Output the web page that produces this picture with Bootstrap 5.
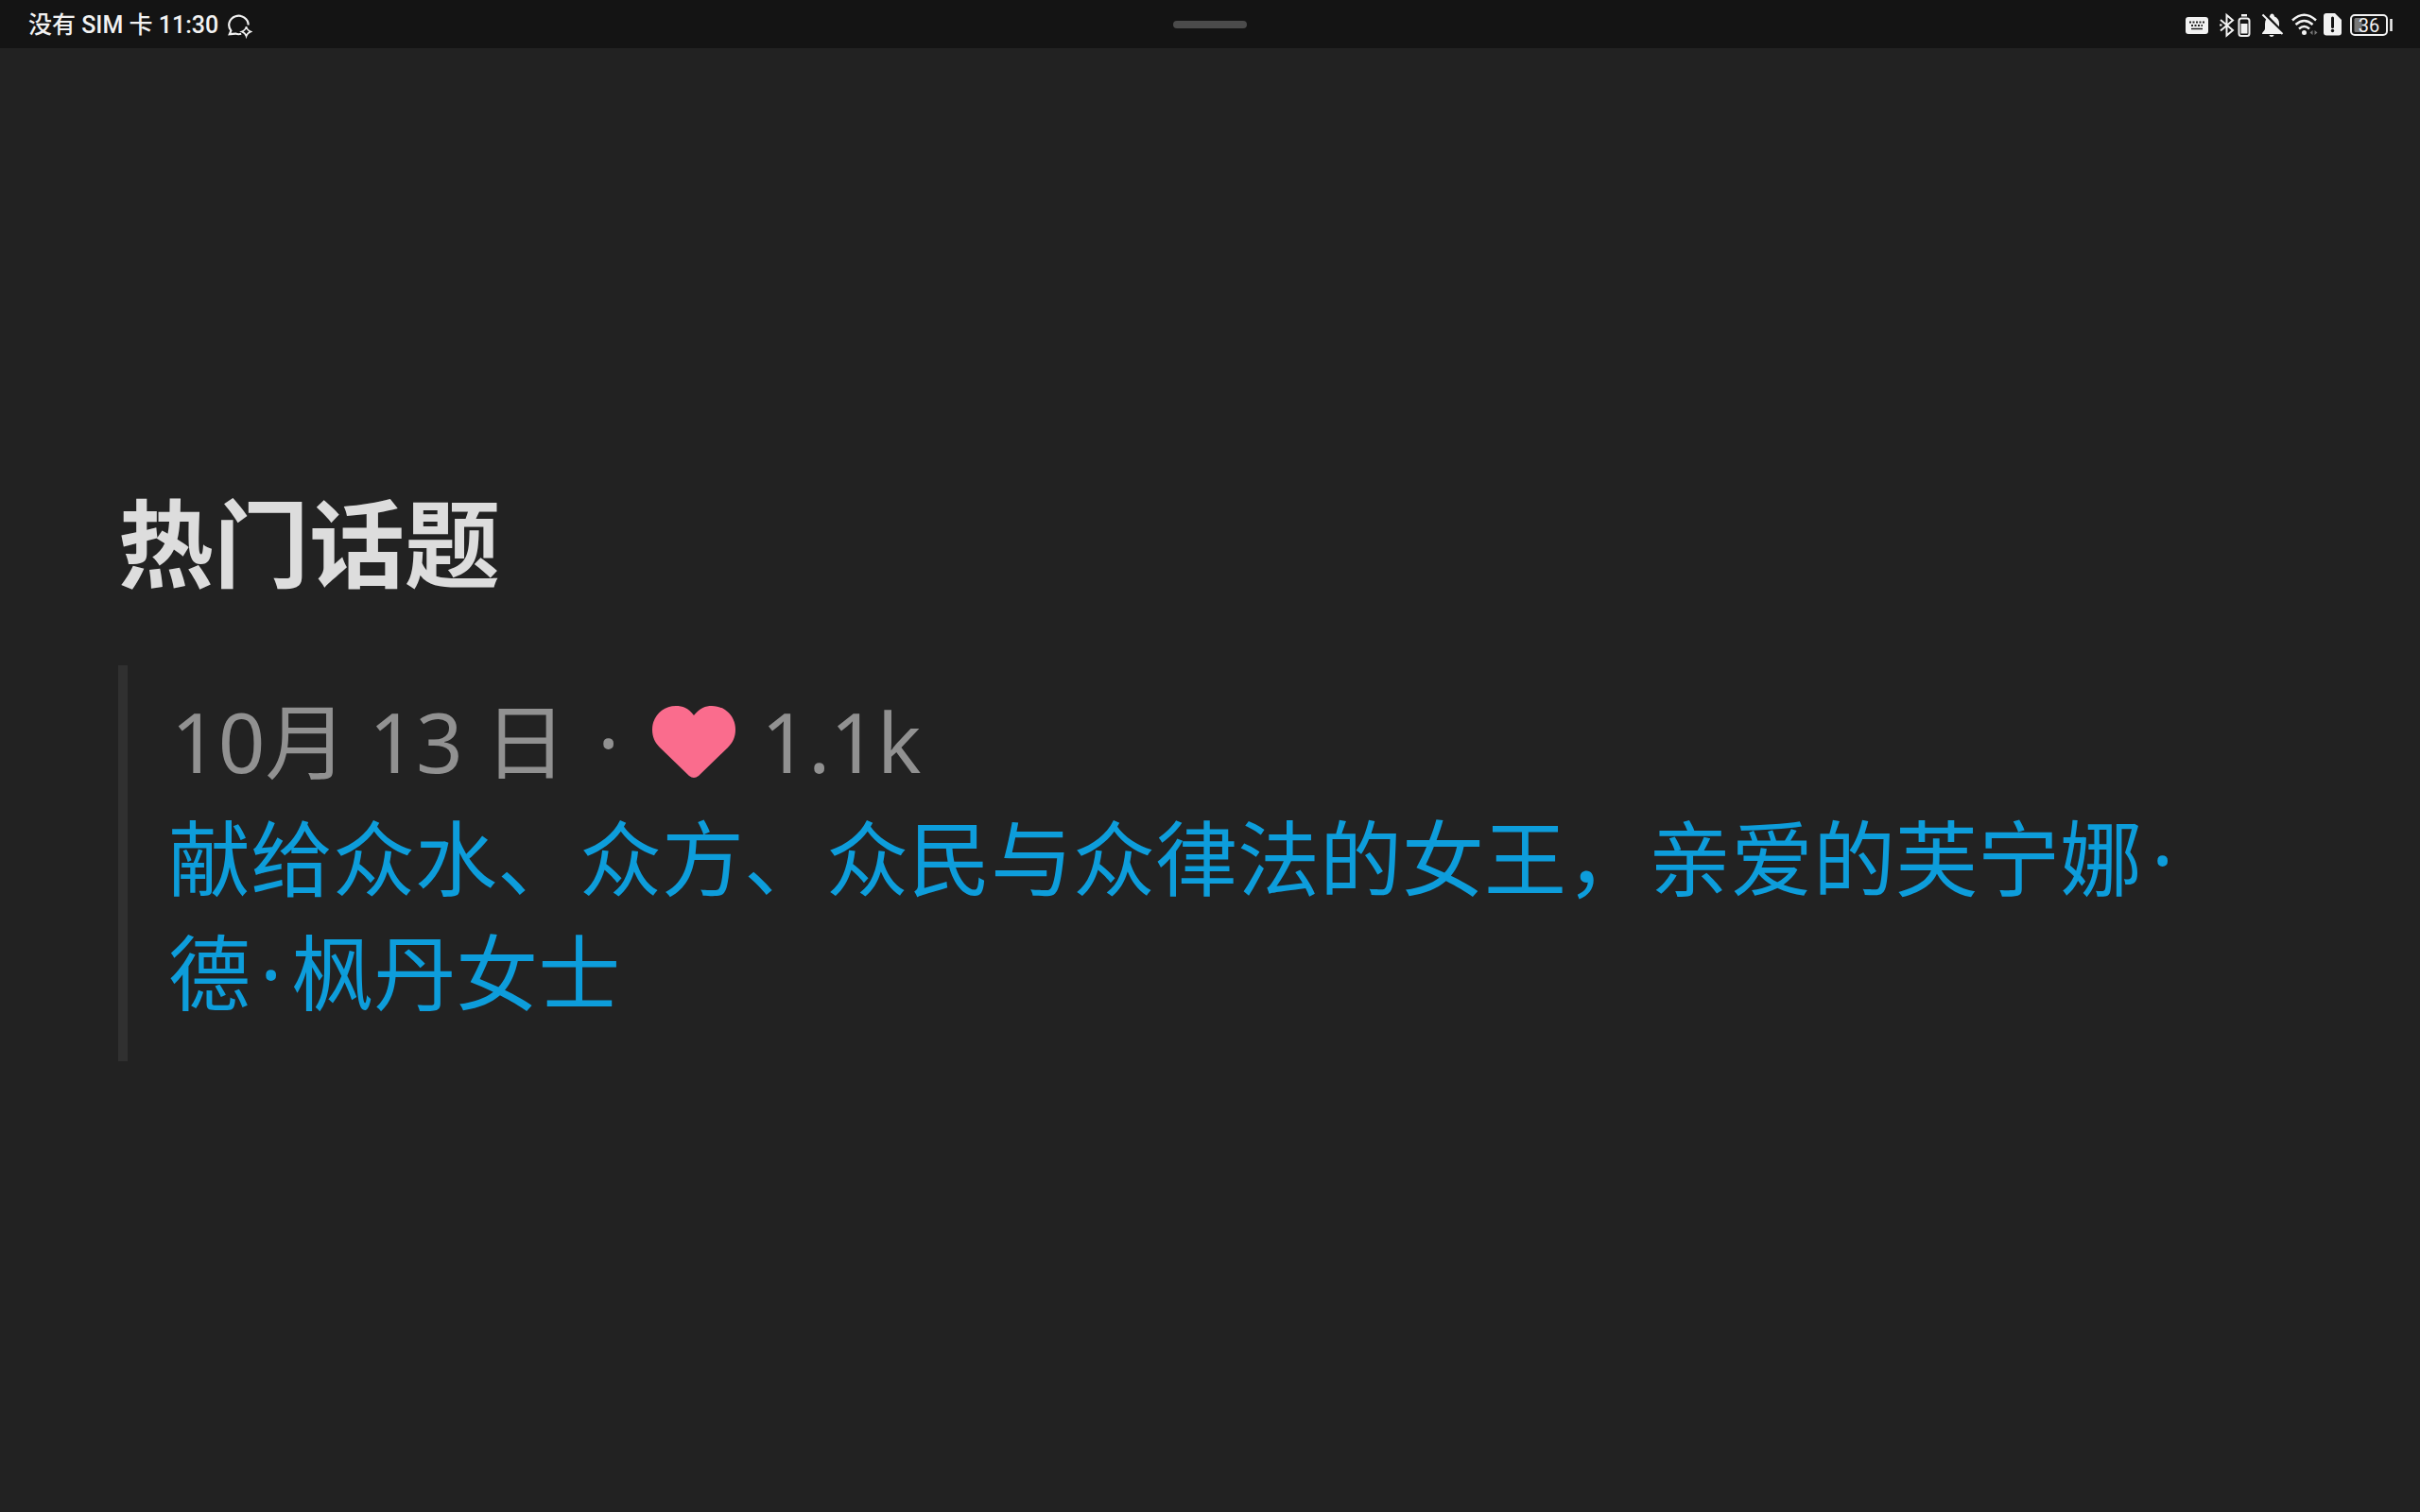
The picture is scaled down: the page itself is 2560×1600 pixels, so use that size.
<!DOCTYPE html>
<html lang="zh-CN">
<head>
<meta charset="utf-8">
<meta name="viewport" content="width=device-width, initial-scale=1">
<title>热门话题</title>
<link href="https://cdn.jsdelivr.net/npm/bootstrap@5.3.0/dist/css/bootstrap.min.css" rel="stylesheet">
<style>
body { background: #222; color: #ddd; font-family: "Noto Sans", "Noto Sans CJK SC", sans-serif; }
.status-bar { height: 51px; padding: 0 28px; background: #141414; color: #f2f2f2; font-size: 25px; line-height: 50px; font-weight: 500; display: grid; grid-template-columns: 1fr auto 1fr; }
.status-bar svg { display: block; flex: none; }
.status-text { font-family: Roboto, "Noto Sans CJK SC", sans-serif; padding: 2px 0 0 2px; }
.drag-handle { width: 78px; height: 8px; border-radius: 4px; background: #4b4b4b; }
.topics { padding: 429px 125px 0; }
.topics h1 { font-family: "Noto Sans CJK SC", sans-serif; font-size: 101px; line-height: 180px; font-weight: 700; margin: 0 0 44px; }
.topic { border-left: 10px solid #303030; padding: 20px 45px 33px 43px; font-size: 87px; line-height: 121px; }
.topic-meta { color: #919191; margin-bottom: 3px; padding-left: 3px; }
.topic-meta svg { display: block; margin: 0 27px 0 25px; }
.topic a { display: block; color: #0d9ddb; text-decoration: none; }
.mid-dot { padding: 0 10px; }
</style>
</head>
<body>
<header class="status-bar align-items-center">
  <div class="status-text d-flex align-items-center">
    <span>没有 SIM 卡 11:30</span>
    <svg class="ms-2" width="28" height="28" viewBox="0 0 26 26" fill="none" stroke="#f2f2f2" stroke-width="2"><path d="M22 12.500A9.500 9 0 1 0 5 18l-1.500 3.500 6-.5c2 .8 4 .7 5.500.2"/><path d="M20 14c.7 3 1.500 4 4.500 5-3 1-3.800 2-4.500 4.500-.7-2.500-1.500-3.500-4.500-4.500 3-1 3.800-2 4.500-5z" stroke-width="1.500"/></svg>
  </div>
  <div class="drag-handle"></div>
  <div class="d-flex align-items-center justify-content-end">
    <svg width="220" height="30" viewBox="2312 10 220 30" role="img" aria-label="电量 36">
      <rect x="2312" y="17" width="24" height="18" rx="3" fill="#f2f2f2"/>
      <path d="M2316 22.500h16M2318 26h12" stroke="#222" stroke-width="2" stroke-dasharray="2 1.500"/>
      <path d="M2318 29.500h12" stroke="#222" stroke-width="1.500"/>
      <g fill="none" stroke="#f2f2f2" stroke-width="2">
        <path d="M2349 20l13 11-6.500 5.500v-21.500l6.500 5.500-13 11"/>
        <path d="M2348 25.500h2.500" />
        <rect x="2368.500" y="18.500" width="11" height="18.500" rx="2.500"/>
      </g>
      <rect x="2371" y="14" width="6" height="2.500" fill="#f2f2f2"/>
      <rect x="2370.500" y="24" width="7" height="10.500" fill="#f2f2f2"/>
      <path d="M2393 35c0-2.500 3-3 3-6v-5c0-4 2-6.500 5-7.500.5-4 4.500-4 5 0 3 1 5 3.500 5 7.500v5c0 3 2 3.500 2 6z" fill="#f2f2f2"/>
      <path d="M2400.500 36h5c-.5 2.500-4.500 2.500-5 0z" fill="#f2f2f2"/>
      <path d="M2395.500 13.500l20.500 21" stroke="#141414" stroke-width="3"/>
      <path d="M2393.500 14.500l21 20.500" stroke="#f2f2f2" stroke-width="2"/>
      <g fill="none" stroke="#f2f2f2" stroke-width="2.500">
        <path d="M2425 20.500q12.500-11.500 25 0M2428.500 25q9-8 18 0M2432 29.500q5.500-5 11 0"/>
      </g>
      <circle cx="2437.500" cy="33.500" r="2.500" fill="#f2f2f2"/>
      <path d="M2446.500 31v5l-3-2.500zM2448.500 31v5l3-2.500z" fill="#777"/>
      <path d="M2461 13h9l7 7v13.500a3 3 0 0 1-3 3h-13a3 3 0 0 1-3-3v-17.500a3 3 0 0 1 3-3z" fill="#f2f2f2"/>
      <path d="M2467.500 18v9.500" stroke="#141414" stroke-width="3" stroke-linecap="round"/>
      <circle cx="2467.500" cy="31.500" r="1.700" fill="#141414"/>
      <rect x="2487" y="15" width="38" height="21" rx="4" fill="none" stroke="#f2f2f2" stroke-width="2"/>
      <path d="M2490.500 19.500q0-1.500 1.500-1.500h6.500v15h-6.500q-1.500 0-1.500-1.500z" fill="#777"/>
      <path d="M2529.500 19v13" stroke="#f2f2f2" stroke-width="2.500"/>
      <text x="2506" y="32.500" text-anchor="middle" font-family="Roboto, sans-serif" font-size="20" font-weight="400" fill="#f2f2f2">36</text>
    </svg>
  </div>
</header>
<main class="topics">
  <h1>热门话题</h1>
  <article class="topic">
    <div class="topic-meta d-flex align-items-center">
      <span>10月 13 日 <span class="mid-dot">·</span></span>
      <svg width="88" height="76" viewBox="0 0 88 76" role="img" aria-label="赞"><path d="M44 10C51 2 56 0 63 0c14 0 25 11 25 25 0 8-3 14-8 19L49 74q-5 4-10 0L8 44C3 39 0 33 0 25 0 11 11 0 25 0c7 0 13 2 19 10z" fill="#fa6c8d"/></svg>
      <span>1.1k</span>
    </div>
    <a href="#">献给众水、众方、众民与众律法的女王，亲爱的芙宁娜<span class="mid-dot">·</span><wbr>德<span class="mid-dot">·</span>枫丹女士</a>
  </article>
</main>
<script src="https://cdn.jsdelivr.net/npm/bootstrap@5.3.0/dist/js/bootstrap.bundle.min.js"></script>
</body>
</html>
